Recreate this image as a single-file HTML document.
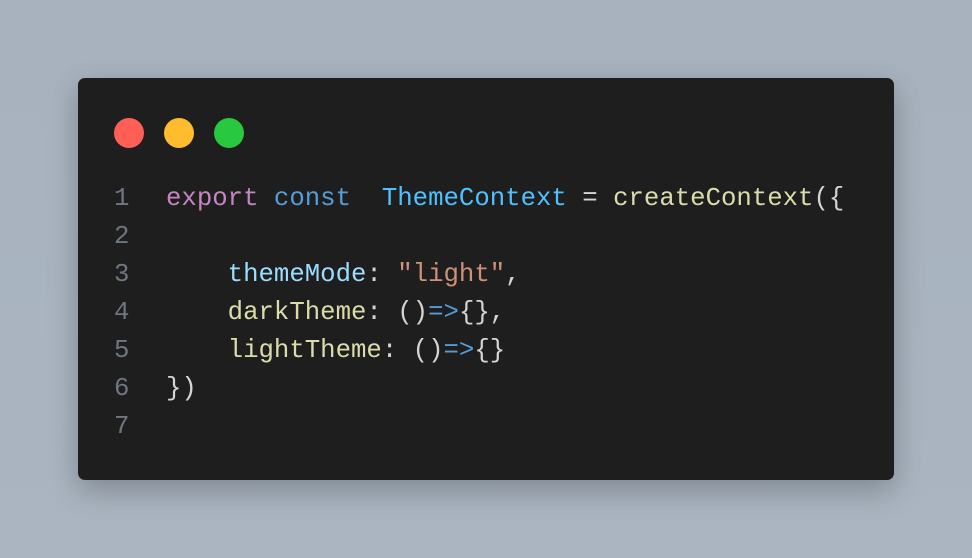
<!DOCTYPE html>
<html><head><style>
html,body{margin:0;padding:0;width:972px;height:558px;overflow:hidden}
body{background:linear-gradient(180deg,#a7b2be 0%,#aab5c1 100%);position:relative}
.card{position:absolute;left:78px;top:78px;width:816px;height:402px;background:#1e1e1e;border-radius:7px;box-shadow:0 10px 30px rgba(0,0,0,.25)}
.dot{position:absolute;top:40px;width:30px;height:30px;border-radius:50%}
.code{position:absolute;left:0;top:102px;font-family:"Liberation Mono",monospace;font-size:25.7px;color:#d4d4d4}
.l{height:38px;line-height:38px;position:relative}
.n{position:absolute;left:36px;color:#6e7681}
.t{position:absolute;left:88px;white-space:pre}
.k{color:#c586c0}.b{color:#569cd6}.v{color:#4fc1ff}.f{color:#dcdcaa}.p{color:#9cdcfe}.s{color:#ce9178}
</style></head><body>
<div class="card">
<div class="dot" style="left:36px;background:#ff5f57"></div>
<div class="dot" style="left:86px;background:#febc2e"></div>
<div class="dot" style="left:136px;background:#28c840"></div>
<div class="code">
<div class="l"><span class="n">1</span><span class="t"><span class="k">export</span> <span class="b">const</span>  <span class="v">ThemeContext</span> = <span class="f">createContext</span>({</span></div>
<div class="l"><span class="n">2</span></div>
<div class="l"><span class="n">3</span><span class="t">    <span class="p">themeMode</span>: <span class="s">"light"</span>,</span></div>
<div class="l"><span class="n">4</span><span class="t">    <span class="f">darkTheme</span>: ()<span class="b">=&gt;</span>{},</span></div>
<div class="l"><span class="n">5</span><span class="t">    <span class="f">lightTheme</span>: ()<span class="b">=&gt;</span>{}</span></div>
<div class="l"><span class="n">6</span><span class="t">})</span></div>
<div class="l"><span class="n">7</span></div>
</div>
</div>
</body></html>
